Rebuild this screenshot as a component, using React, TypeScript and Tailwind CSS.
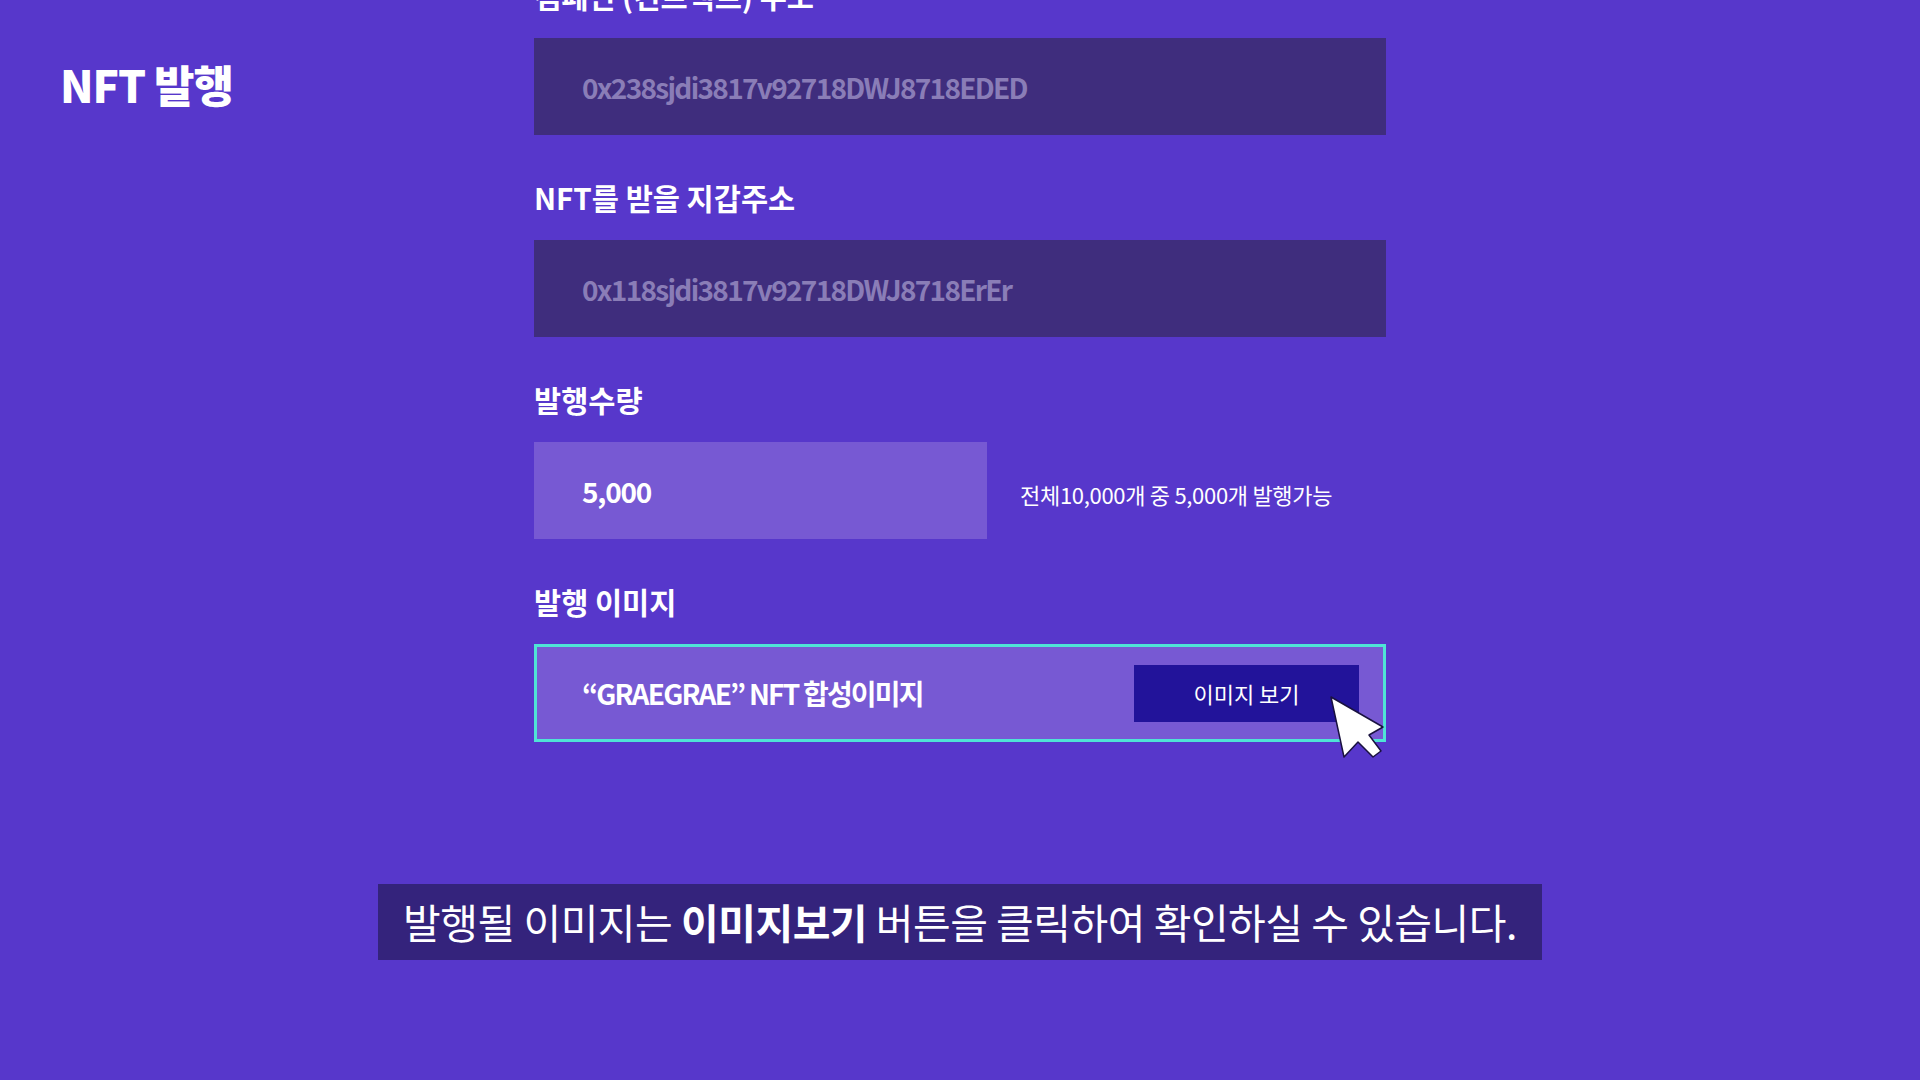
import React from "react";

const font = "font-['Noto_Sans_CJK_KR','Noto_Sans',sans-serif]";

const Field = ({ label, children }: { label: string; children: React.ReactNode }) => (
  <div className="flex flex-col">
    <div className="h-[40px] text-[29.5px] leading-[38px] font-bold text-white">{label}</div>
    <div className="mt-[22px]">{children}</div>
  </div>
);

const Cursor = () => (
  <svg
    className="absolute left-[792px] top-[48px]"
    width="58"
    height="66"
    viewBox="-2 -2 58 66"
  >
    <path
      d="M0 0 L13 60 L27 45 L42 60 L50 54 L38 38 L52 30 Z"
      fill="#ffffff"
      stroke="#1a1240"
      strokeWidth="1.5"
      strokeLinejoin="round"
    />
  </svg>
);

export default function App() {
  return (
    <div className={`${font} w-full h-[1080px] bg-[#5737cb] overflow-hidden flex flex-col`}>
      <div className="grid grid-cols-[1fr_852px_1fr]">
        <div className="pl-[60px] pt-[62px]">
          <h1 className="text-[44px] leading-none font-black text-white tracking-tight">NFT 발행</h1>
        </div>

        <div className="mt-[-24px] flex flex-col gap-[43px]">
          <Field label="캠페인 (컨트랙트) 주소">
            <div className="h-[97px] bg-[#3f2d7d] flex items-center pl-[48px] text-[28px] font-semibold text-[#8a7db7] tracking-[-1.7px]">
              0x238sjdi3817v92718DWJ8718EDED
            </div>
          </Field>

          <Field label="NFT를 받을 지갑주소">
            <div className="h-[97px] bg-[#3f2d7d] flex items-center pl-[48px] text-[28px] font-semibold text-[#8a7db7] tracking-[-1.7px]">
              0x118sjdi3817v92718DWJ8718ErEr
            </div>
          </Field>

          <Field label="발행수량">
            <div className="flex items-center">
              <div className="w-[453px] h-[97px] bg-[#7759d3] flex items-center pl-[48px] text-[28px] font-bold text-white tracking-[-1.2px]">
                5,000
              </div>
              <span className="ml-[33px] mt-[8px] text-[22px] text-white tracking-[-0.3px]">
                전체10,000개 중 5,000개 발행가능
              </span>
            </div>
          </Field>

          <Field label="발행 이미지">
            <div className="relative h-[98px] bg-[#7759d3] border-[3px] border-[#4fe3d6] flex items-center justify-between pl-[45px] pr-[24px]">
              <span className="text-[28px] font-bold text-white tracking-[-1.8px]">“GRAEGRAE” NFT 합성이미지</span>
              <button className="w-[225px] h-[57px] bg-[#22139a] text-white text-[22px]">이미지 보기</button>
              <Cursor />
            </div>
          </Field>
        </div>
        <div />
      </div>

      <div className="mt-[142px] flex justify-center">
        <div className="w-[1164px] h-[76px] bg-[#34237c] flex items-center justify-center text-[41px] text-white tracking-[-0.5px]">
          <span>
            발행될 이미지는 <b className="font-bold">이미지보기</b> 버튼을 클릭하여 확인하실 수 있습니다.
          </span>
        </div>
      </div>
    </div>
  );
}
